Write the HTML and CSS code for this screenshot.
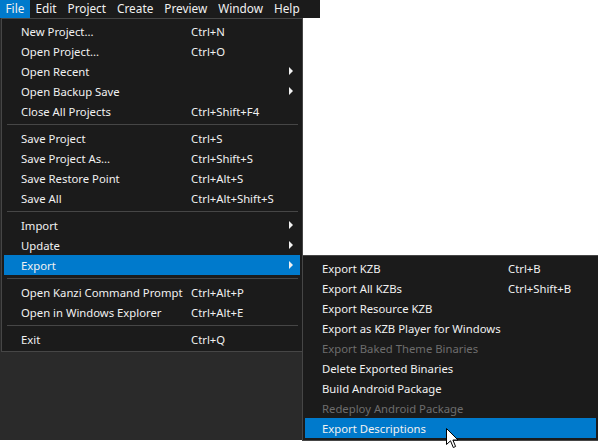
FILE: index.html
```html
<!DOCTYPE html>
<html>
<head>
<meta charset="utf-8">
<link rel="stylesheet" href="styles.css">
</head>
<body>
<div class="screen">
  <div class="menubar">
    <div class="mb-item active">File</div>
    <div class="mb-item">Edit</div>
    <div class="mb-item">Project</div>
    <div class="mb-item">Create</div>
    <div class="mb-item">Preview</div>
    <div class="mb-item">Window</div>
    <div class="mb-item">Help</div>
  </div>
  <div class="appbg"></div>

  <div class="menu file-menu">
    <div class="item"><span class="label">New Project...</span><span class="key">Ctrl+N</span></div>
    <div class="item"><span class="label">Open Project...</span><span class="key">Ctrl+O</span></div>
    <div class="item sub"><span class="label">Open Recent</span><span class="arrow"></span></div>
    <div class="item sub"><span class="label">Open Backup Save</span><span class="arrow"></span></div>
    <div class="item"><span class="label">Close All Projects</span><span class="key">Ctrl+Shift+F4</span></div>
    <div class="sep"></div>
    <div class="item"><span class="label">Save Project</span><span class="key">Ctrl+S</span></div>
    <div class="item"><span class="label">Save Project As...</span><span class="key">Ctrl+Shift+S</span></div>
    <div class="item"><span class="label">Save Restore Point</span><span class="key">Ctrl+Alt+S</span></div>
    <div class="item"><span class="label">Save All</span><span class="key">Ctrl+Alt+Shift+S</span></div>
    <div class="sep"></div>
    <div class="item sub"><span class="label">Import</span><span class="arrow"></span></div>
    <div class="item sub"><span class="label">Update</span><span class="arrow"></span></div>
    <div class="item sub hl"><span class="label">Export</span><span class="arrow"></span></div>
    <div class="sep"></div>
    <div class="item"><span class="label">Open Kanzi Command Prompt</span><span class="key">Ctrl+Alt+P</span></div>
    <div class="item"><span class="label">Open in Windows Explorer</span><span class="key">Ctrl+Alt+E</span></div>
    <div class="sep"></div>
    <div class="item"><span class="label">Exit</span><span class="key">Ctrl+Q</span></div>
  </div>

  <div class="menu export-menu">
    <div class="item"><span class="label">Export KZB</span><span class="key">Ctrl+B</span></div>
    <div class="item"><span class="label">Export All KZBs</span><span class="key">Ctrl+Shift+B</span></div>
    <div class="item"><span class="label">Export Resource KZB</span></div>
    <div class="item"><span class="label">Export as KZB Player for Windows</span></div>
    <div class="item disabled"><span class="label">Export Baked Theme Binaries</span></div>
    <div class="item"><span class="label">Delete Exported Binaries</span></div>
    <div class="item"><span class="label">Build Android Package</span></div>
    <div class="item disabled"><span class="label">Redeploy Android Package</span></div>
    <div class="item hl"><span class="label">Export Descriptions</span></div>
  </div>

  <svg class="cursor" width="14" height="22" viewBox="0 0 14 22">
    <path d="M0.5 0.5 L0.5 16.5 L4.5 12.8 L7.3 19.5 L9.6 18.5 L6.9 12 L12 12 Z" fill="#ffffff" stroke="#000000" stroke-width="1" stroke-linejoin="miter"/>
  </svg>
</div>
</body>
</html>
```

FILE: styles.css
```css
html, body {
  margin: 0;
  padding: 0;
  background: #ffffff;
}

.screen {
  position: relative;
  width: 598px;
  height: 448px;
  overflow: hidden;
  font-family: "Noto Sans", "Open Sans", sans-serif;
  font-size: 11.3px;
  color: #f1f1f1;
}

.menubar {
  display: flex;
  width: 320px;
  height: 18px;
  background: #1b1b1b;
  font-size: 11.8px;
}

.mb-item {
  height: 18px;
  line-height: 17px;
  padding: 0 5.5px;
  color: #f1f1f1;
}

.mb-item.active {
  background: #007acc;
}

.appbg {
  width: 302px;
  height: 422px;
  background: #2a2a2a;
}

.menu {
  position: absolute;
  background: #1b1b1b;
  border: 1px solid #464646;
  box-sizing: border-box;
  display: flex;
  flex-direction: column;
}

.file-menu {
  left: 1px;
  top: 18px;
  width: 302px;
  padding: 2px 2px 2px 2px;
}

.export-menu {
  left: 302px;
  top: 255px;
  width: 296px;
  height: 186px;
  padding: 2px 2px 2px 2px;
  border-right: none;
}

.item {
  position: relative;
  display: flex;
  align-items: center;
  height: 20px;
  padding-left: 17px;
  white-space: nowrap;
}

.item .label {
  width: 170px;
  flex-shrink: 0;
}

.export-menu .item .label {
  width: 186px;
}

.item .key {
  color: #f1f1f1;
}

.item.hl {
  background: #007acc;
}

.item.disabled {
  color: #6d6d6d;
}

.arrow {
  position: absolute;
  right: 7px;
  top: 6px;
  width: 0;
  height: 0;
  border-top: 4px solid transparent;
  border-bottom: 4px solid transparent;
  border-left: 4px solid #f1f1f1;
}

.sep {
  height: 7px;
  display: flex;
  align-items: center;
  padding: 0 2px 0 3px;
}

.sep::before {
  content: "";
  display: block;
  flex: 1;
  height: 1px;
  background: #464646;
}

.cursor {
  position: absolute;
  left: 446px;
  top: 428px;
}
```
